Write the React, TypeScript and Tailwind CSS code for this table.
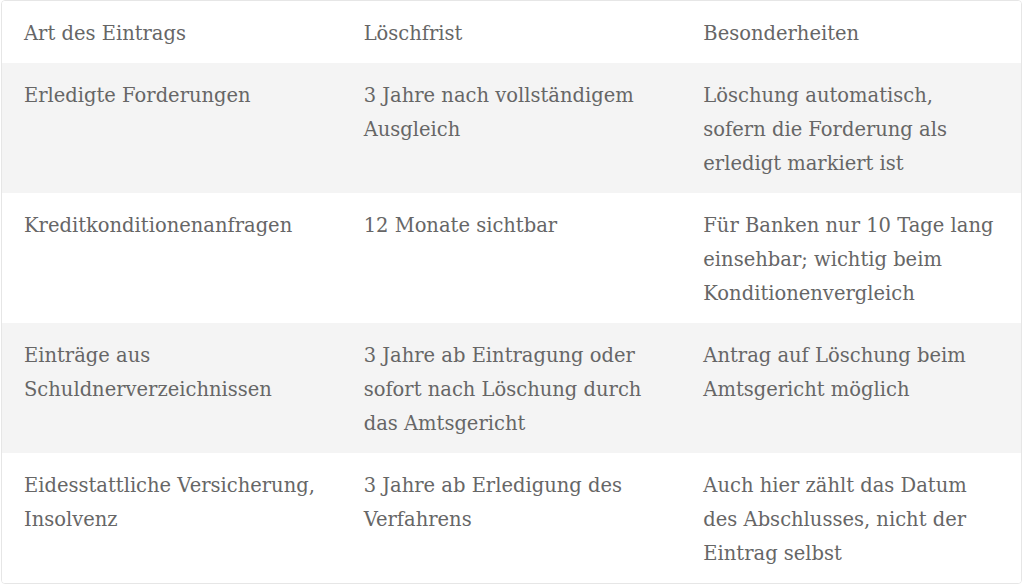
const rows = [
  {
    art: "Erledigte Forderungen",
    frist: "3 Jahre nach vollständigem Ausgleich",
    info: "Löschung automatisch, sofern die Forderung als erledigt markiert ist",
  },
  {
    art: "Kreditkonditionenanfragen",
    frist: "12 Monate sichtbar",
    info: "Für Banken nur 10 Tage lang einsehbar; wichtig beim Konditionenvergleich",
  },
  {
    art: "Einträge aus Schuldnerverzeichnissen",
    frist: "3 Jahre ab Eintragung oder sofort nach Löschung durch das Amtsgericht",
    info: "Antrag auf Löschung beim Amtsgericht möglich",
  },
  {
    art: "Eidesstattliche Versicherung, Insolvenz",
    frist: "3 Jahre ab Erledigung des Verfahrens",
    info: "Auch hier zählt das Datum des Abschlusses, nicht der Eintrag selbst",
  },
];

export default function App() {
  return (
    <div className="bg-white min-h-[587px] w-[1024px] pl-px font-['DejaVu_Serif',serif] text-[19.5px] leading-[34px] text-[#666]">
      <div className="w-[1021px] overflow-hidden rounded-[4px] border border-[#e6e6e6]">
        <div className="grid grid-cols-3 h-[62px] bg-white">
          <div className="pl-[22px] pr-[25px] pt-[16px]">Art des Eintrags</div>
          <div className="pl-[22px] pr-[25px] pt-[16px]">Löschfrist</div>
          <div className="pl-[22px] pr-[25px] pt-[16px]">Besonderheiten</div>
        </div>
        {rows.map((r, i) => (
          <div
            key={r.art}
            className={`grid grid-cols-3 h-[130px] ${i % 2 === 0 ? "bg-[#f4f4f4]" : "bg-white"}`}
          >
            <div className="pl-[22px] pr-[25px] pt-[16px]">{r.art}</div>
            <div className="pl-[22px] pr-[25px] pt-[16px]">{r.frist}</div>
            <div className="pl-[22px] pr-[25px] pt-[16px]">{r.info}</div>
          </div>
        ))}
      </div>
    </div>
  );
}
